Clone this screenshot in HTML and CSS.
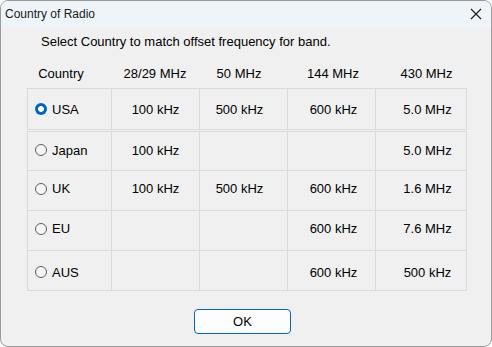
FILE: index.html
```html
<!DOCTYPE html>
<html>
<head>
<meta charset="utf-8">
<link rel="stylesheet" href="styles.css">
</head>
<body>
<div class="window">
  <div class="titlebar">
    <span class="title">Country of Radio</span>
    <svg class="close" width="12" height="12" viewBox="0 0 12 12"><path d="M1 1L11 11M11 1L1 11" stroke="#1a1a1a" stroke-width="1.1" fill="none"/></svg>
  </div>
  <div class="content">
    <p class="intro">Select Country to match offset frequency for band.</p>
    <div class="head">
      <div class="c0">Country</div>
      <div class="c1">28/29 MHz</div>
      <div class="c2">50 MHz</div>
      <div class="c3">144 MHz</div>
      <div class="c4">430 MHz</div>
    </div>
    <div class="table">
      <div class="row first">
        <div class="cell c0"><span class="radio on"></span>USA</div>
        <div class="cell c1">100 kHz</div>
        <div class="cell c2">500 kHz</div>
        <div class="cell c3">600 kHz</div>
        <div class="cell c4">5.0 MHz</div>
      </div>
      <div class="row second raise1">
        <div class="cell c0"><span class="radio"></span>Japan</div>
        <div class="cell c1">100 kHz</div>
        <div class="cell c2"></div>
        <div class="cell c3"></div>
        <div class="cell c4">5.0 MHz</div>
      </div>
      <div class="row raise2">
        <div class="cell c0"><span class="radio"></span>UK</div>
        <div class="cell c1">100 kHz</div>
        <div class="cell c2">500 kHz</div>
        <div class="cell c3">600 kHz</div>
        <div class="cell c4">1.6 MHz</div>
      </div>
      <div class="row raise2">
        <div class="cell c0"><span class="radio"></span>EU</div>
        <div class="cell c1"></div>
        <div class="cell c2"></div>
        <div class="cell c3">600 kHz</div>
        <div class="cell c4">7.6 MHz</div>
      </div>
      <div class="row last lower">
        <div class="cell c0"><span class="radio"></span>AUS</div>
        <div class="cell c1"></div>
        <div class="cell c2"></div>
        <div class="cell c3">600 kHz</div>
        <div class="cell c4">500 kHz</div>
      </div>
    </div>
    <div class="actions"><button class="ok">OK</button></div>
  </div>
</div>
</body>
</html>
```
FILE: styles.css
```css
* { box-sizing: border-box; }
html, body { margin: 0; padding: 0; background: #ffffff; }
body {
  font-family: "Liberation Sans", Arial, sans-serif;
  font-size: 13px;
  color: #000;
}
.window {
  width: 492px;
  height: 347px;
  border: 1px solid #9a9a9a;
  border-radius: 8px;
  overflow: hidden;
  background: #f0f0f0;
  display: flex;
  flex-direction: column;
}
.titlebar {
  height: 26px;
  background: #eff4f9;
  display: flex;
  align-items: center;
  justify-content: space-between;
  padding: 0 9px 0 4px;
  flex: none;
}
.title { font-size: 12px; color: #1a1a1a; }
.close { display: block; }
.content {
  flex: 1;
  padding-left: 26px;
}
.intro {
  margin: 7px 0 0 14px;
  line-height: 16px;
}
.head, .row {
  display: grid;
  grid-template-columns: 84px 88px 88px 88px 92px;
  width: 440px;
}
.head {
  height: 38px;
  padding-top: 16px;
  line-height: 16px;
}
.head div, .cell { text-align: center; }
.c2 { padding-right: 8px; }
.c3 { padding-left: 4px; }
.c4 { padding-left: 11px; }
.head .c0 { padding-right: 16px; }
.row {
  border: 1px solid #dadada;
  border-bottom: none;
  height: 40px;
}
.row.first { height: 42px; border-bottom: 1px solid #dadada; }
.row.second { margin-top: 1px; height: 39px; }
.row.last { height: 41px; border-bottom: 1px solid #dadada; }
.raise1 .cell { padding-bottom: 2px; }
.raise2 .cell { padding-bottom: 4px; }
.lower .cell { padding-top: 3px; }
.cell {
  border-right: 1px solid #dadada;
  display: flex;
  align-items: center;
  justify-content: center;
}
.cell.c4 { border-right: none; }
.cell.c0 {
  justify-content: flex-start;
  padding-left: 7px;
}
.radio {
  width: 12px;
  height: 12px;
  border-radius: 50%;
  border: 1px solid #5f5f5f;
  background: #f6f6f6;
  margin-right: 5px;
  flex: none;
}
.radio.on {
  border: none;
  background: radial-gradient(circle, #ffffff 0 2.6px, #0067c0 3.2px);
}
.actions {
  padding: 18px 0 0 167px;
}
.ok {
  width: 97px;
  height: 25px;
  border: 1px solid #0067c0;
  border-radius: 4px;
  background: #fdfdfd;
  font-family: "Liberation Sans", Arial, sans-serif;
  font-size: 13px;
  color: #000;
  padding: 0;
}
```
